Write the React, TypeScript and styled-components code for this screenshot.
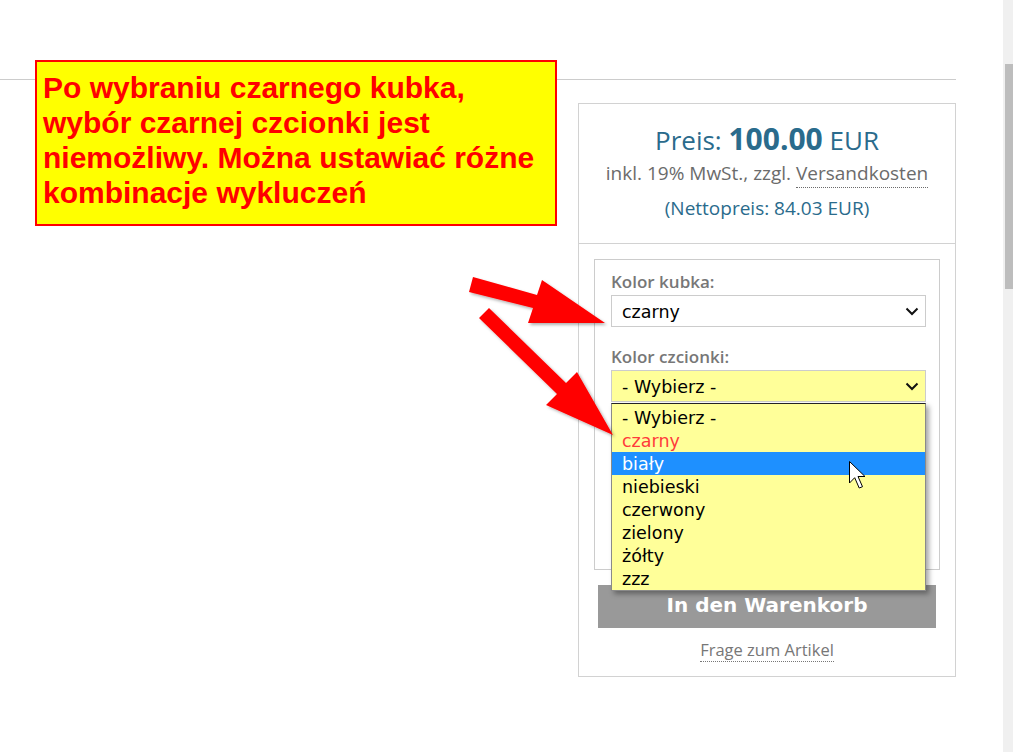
import React from "react";
import styled, { createGlobalStyle } from "styled-components";

const GlobalStyle = createGlobalStyle`
  html, body {
    margin: 0;
    padding: 0;
    background: #ffffff;
  }
  body {
    font-family: "Open Sans", "Noto Sans", sans-serif;
  }
  * {
    box-sizing: border-box;
  }
`

const Page = styled.div`
  display: flex;
  width: 1013px;
  height: 752px;
  overflow: hidden;
`

const Main = styled.div`
  position: relative;
  flex: 1;
`

const Header = styled.div`
  width: 956px;
  height: 80px;
  border-bottom: 1px solid #cccccc;
`

const Content = styled.div`
  width: 956px;
  display: flex;
  justify-content: flex-end;
  padding-top: 23px;
`

const BuyBox = styled.div`
  width: 378px;
  border: 1px solid #d2d2d2;
`

const PriceSection = styled.div`
  height: 140px;
  padding-top: 18px;
  text-align: center;
  border-bottom: 1px solid #d2d2d2;
`

const PriceLine = styled.div`
  font-size: 26px;
  line-height: 34px;
  color: #2a6b8c;
`

const PriceValue = styled.span`
  font-size: 30px;
  font-weight: 700;
`

const TaxLine = styled.div`
  margin-top: 3px;
  font-size: 19px;
  line-height: 26px;
  color: #6b6b6b;
`

const DottedLink = styled.span`
  padding-bottom: 1px;
  border-bottom: 1px dotted #6b6b6b;
`

const NetLine = styled.div`
  margin-top: 10px;
  font-size: 19px;
  line-height: 24px;
  color: #2a6b8c;
`

const Form = styled.div`
  padding: 15px 15px 14px;
  display: flex;
  flex-direction: column;
  align-items: center;
`

const Fieldset = styled.div`
  width: 100%;
  height: 311px;
  border: 1px solid #cccccc;
  padding: 10px 13px 0 16px;
`

const Label = styled.div<{ $top?: number }>`
  margin-top: ${(p) => p.$top ?? 0}px;
  margin-bottom: 1px;
  font-size: 17px;
  font-weight: 600;
  line-height: 24px;
  color: #777777;
`

const SelectWrap = styled.div`
  position: relative;
`

const SelectBox = styled.div<{ $highlight?: boolean }>`
  height: 32px;
  display: flex;
  align-items: center;
  justify-content: space-between;
  padding: 3px 6px 0 10px;
  border: 1px solid #cccccc;
  background: ${(p) => (p.$highlight ? "#ffff99" : "#ffffff")};
  font-family: "DejaVu Sans", Verdana, sans-serif;
  font-size: 17.5px;
  line-height: 23px;
  color: #000000;

  svg {
    margin-top: -3px;
  }
`

const OptionList = styled.div`
  position: absolute;
  left: 0;
  right: 0;
  top: 33px;
  padding-top: 2px;
  background: #ffff99;
  border: 1px solid #8a8a8a;
  border-top-color: #222222;
  box-shadow: 3px 3px 5px rgba(0, 0, 0, 0.35);
  z-index: 2;
`

const OptionRow = styled.div<{ $active?: boolean; $disabled?: boolean }>`
  height: 23px;
  padding-left: 10px;
  font-family: "DejaVu Sans", Verdana, sans-serif;
  font-size: 17.5px;
  line-height: 25px;
  background: ${(p) => (p.$active ? "#1e90ff" : "transparent")};
  color: ${(p) => (p.$active ? "#ffffff" : p.$disabled ? "#ff3b3b" : "#000000")};
`

const CartButton = styled.button`
  width: calc(100% - 8px);
  height: 43px;
  margin-top: 15px;
  border: 0;
  padding: 0 0 3px;
  background: #999999;
  color: #ffffff;
  font-family: "DejaVu Sans", Verdana, sans-serif;
  font-weight: 700;
  font-size: 20px;
`

const AskLink = styled.span`
  margin-top: 10px;
  font-size: 16.5px;
  line-height: 23px;
  color: #777777;
  border-bottom: 1px dotted #777777;
`

const Note = styled.div`
  position: absolute;
  left: 35px;
  top: 60px;
  width: 522px;
  height: 166px;
  padding: 8px 6px 0;
  background: #ffff00;
  border: 2px solid #ff0000;
  color: #ff0000;
  font-family: "Liberation Sans", Arial, sans-serif;
  font-weight: 700;
  font-size: 30px;
  line-height: 35px;
  white-space: nowrap;

  span {
    display: block;
  }
`

const Overlay = styled.svg`
  position: absolute;
  left: 0;
  top: 0;
  pointer-events: none;
  z-index: 3;
`

const Scrollbar = styled.div`
  width: 10px;
  background: #f0f0f0;
  padding: 64px 0 0 2px;
`

const Thumb = styled.div`
  width: 8px;
  height: 225px;
  background: #bdbdbd;
`

const Chevron = () => (
  <svg width="14" height="9" viewBox="0 0 14 9">
    <polyline points="1.5,1.5 7,7 12.5,1.5" fill="none" stroke="#111" strokeWidth="2" />
  </svg>
)

const options = ["- Wybierz -", "czarny", "biały", "niebieski", "czerwony", "zielony", "żółty", "zzz"];

const App = () => {
  return (
    <Page>
      <GlobalStyle />
      <Main>
        <Header />
        <Content>
          <BuyBox>
            <PriceSection>
              <PriceLine>
                Preis: <PriceValue>100.00</PriceValue> EUR
              </PriceLine>
              <TaxLine>
                inkl. 19% MwSt., zzgl. <DottedLink>Versandkosten</DottedLink>
              </TaxLine>
              <NetLine>(Nettopreis: 84.03 EUR)</NetLine>
            </PriceSection>
            <Form>
              <Fieldset>
                <Label>Kolor kubka:</Label>
                <SelectBox>
                  czarny
                  <Chevron />
                </SelectBox>
                <Label $top={18}>Kolor czcionki:</Label>
                <SelectWrap>
                  <SelectBox $highlight>
                    - Wybierz -
                    <Chevron />
                  </SelectBox>
                  <OptionList>
                    {options.map((o, i) => (
                      <OptionRow key={o} $active={i === 2} $disabled={i === 1}>
                        {o}
                      </OptionRow>
                    ))}
                  </OptionList>
                </SelectWrap>
              </Fieldset>
              <CartButton>In den Warenkorb</CartButton>
              <AskLink>Frage zum Artikel</AskLink>
            </Form>
          </BuyBox>
        </Content>

        <Note>
          <span>Po wybraniu czarnego kubka,</span>
          <span>wybór czarnej czcionki jest</span>
          <span>niemożliwy. Można ustawiać różne</span>
          <span>kombinacje wykluczeń</span>
        </Note>

        <Overlay width="1003" height="752" viewBox="0 0 1003 752">
          <defs>
            <filter id="arrowShadow" x="-10%" y="-10%" width="130%" height="130%">
              <feDropShadow dx="2" dy="2" stdDeviation="1.5" floodColor="#000" floodOpacity="0.3" />
            </filter>
          </defs>
          <g fill="#ff0000" filter="url(#arrowShadow)">
            <polygon points="473,277 537,295 542,280 605,323 528,323 533,308 469,292" />
            <polygon points="489,308 566,383 577,372 613,435 546,405 557,394 479,318" />
          </g>
          <path
            d="M849.5 461.5 L849.5 483 L854.7 477.7 L859.2 488 L862.5 486.7 L858 476.5 L865 476.5 Z"
            fill="#ffffff"
            stroke="#000000"
            strokeWidth="1"
            strokeLinejoin="round"
          />
        </Overlay>
      </Main>
      <Scrollbar>
        <Thumb />
      </Scrollbar>
    </Page>
  );
}

export default App
